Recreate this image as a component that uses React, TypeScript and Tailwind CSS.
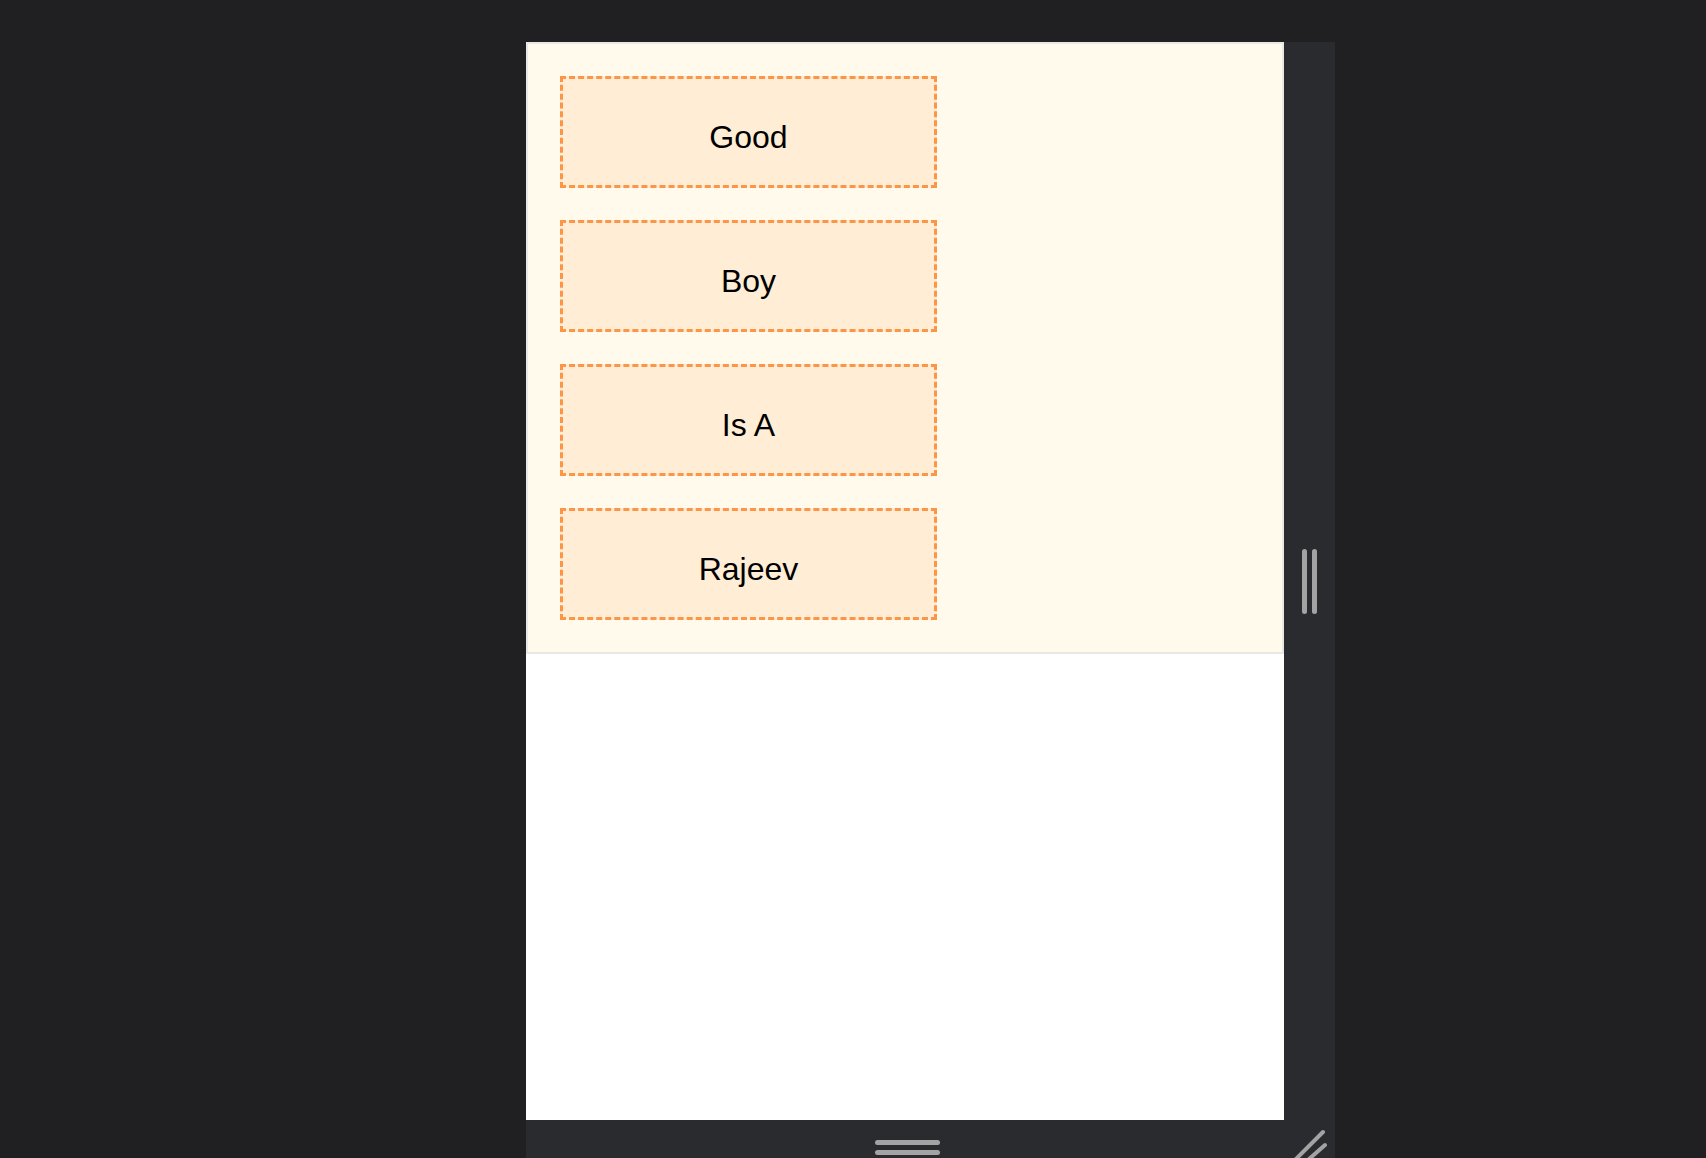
import React from "react";

const words = ["Good", "Boy", "Is A", "Rajeev"];

export default function App() {
  return (
    <div className="h-[1158px] w-full overflow-hidden bg-[#202022]" style={{ fontFamily: '"Liberation Sans", Arial, sans-serif' }}>
      <div className="ml-[526px] pt-[42px] w-[809px] flex flex-col">
        <div className="flex">
          <div className="w-[758px] flex flex-col">
            <div className="border-2 border-[#e8e8e6] bg-[#fffaeb] p-8 flex flex-col gap-8">
              {words.map((w) => (
                <div
                  key={w}
                  className="w-[377px] h-[112px] border-[3px] border-dashed border-[#fd9546] bg-[#ffedd5] flex items-center justify-center pt-[10px] text-[32px] text-black"
                >
                  {w}
                </div>
              ))}
            </div>
            <div className="h-[466px] bg-white" />
          </div>
          <div className="w-[51px] bg-[#2a2b2f] flex items-center justify-center gap-[5px]">
            <div className="w-[5px] h-[65px] rounded-full bg-[#a3a3a3]" />
            <div className="w-[5px] h-[65px] rounded-full bg-[#a3a3a3]" />
          </div>
        </div>
        <div className="relative h-[60px] bg-[#2a2b2f]">
          <div className="w-[758px] pt-[20px] flex flex-col items-center gap-[5px] pl-[5px]">
            <div className="w-[65px] h-[5px] rounded-full bg-[#a3a3a3]" />
            <div className="w-[65px] h-[5px] rounded-full bg-[#a3a3a3]" />
          </div>
          <svg className="absolute left-[758px] top-0" width="51" height="60" viewBox="0 0 51 60">
            <line x1="11" y1="40" x2="39" y2="12" stroke="#a3a3a3" strokeWidth="4" strokeLinecap="round" />
            <line x1="24" y1="40" x2="41" y2="25" stroke="#a3a3a3" strokeWidth="4" strokeLinecap="round" />
          </svg>
        </div>
      </div>
    </div>
  );
}
